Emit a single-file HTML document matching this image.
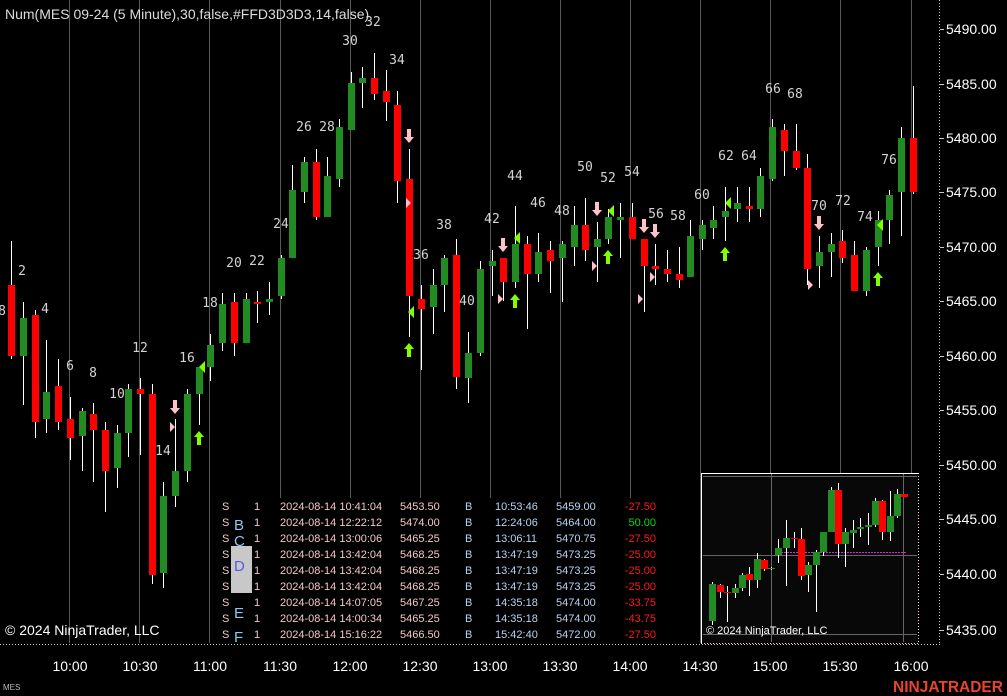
<!DOCTYPE html>
<html><head><meta charset="utf-8"><style>
html,body{margin:0;padding:0;background:#000;width:1007px;height:696px;overflow:hidden}
svg{display:block}
.w line{stroke:#fff;stroke-width:1}
.g{fill:#228b22}.r{fill:#f00}
.lb{font-family:"DejaVu Sans Mono","Liberation Mono",monospace;font-size:13px;fill:#d3d3d3;text-anchor:middle}
.ax{font-family:"Liberation Sans",sans-serif;font-size:14px;fill:#fff}
.tb{font-family:"Liberation Sans",sans-serif;font-size:11px}
</style></head><body>
<svg width="1007" height="696" xmlns="http://www.w3.org/2000/svg">
<g stroke="#5a5a5a" stroke-width="1">
<line x1="69.5" y1="0" x2="69.5" y2="643"/><line x1="139.5" y1="0" x2="139.5" y2="643"/><line x1="209.5" y1="0" x2="209.5" y2="643"/><line x1="280.5" y1="0" x2="280.5" y2="643"/><line x1="350.5" y1="0" x2="350.5" y2="643"/><line x1="420.5" y1="0" x2="420.5" y2="643"/><line x1="490.5" y1="0" x2="490.5" y2="643"/><line x1="560.5" y1="0" x2="560.5" y2="643"/><line x1="630.5" y1="0" x2="630.5" y2="643"/><line x1="700.5" y1="0" x2="700.5" y2="643"/><line x1="770.5" y1="0" x2="770.5" y2="643"/><line x1="840.5" y1="0" x2="840.5" y2="643"/><line x1="911.5" y1="0" x2="911.5" y2="643"/>
</g>
<rect x="211" y="498" width="489" height="145" fill="#000"/>
<g stroke="#ccc" stroke-dasharray="1,2"><line x1="0" y1="644.5" x2="940" y2="644.5"/><line x1="939.5" y1="0" x2="939.5" y2="645"/></g>
<g stroke="#ccc"><line x1="940" y1="29.5" x2="944" y2="29.5"/><line x1="940" y1="84.5" x2="944" y2="84.5"/><line x1="940" y1="138.5" x2="944" y2="138.5"/><line x1="940" y1="192.5" x2="944" y2="192.5"/><line x1="940" y1="247.5" x2="944" y2="247.5"/><line x1="940" y1="301.5" x2="944" y2="301.5"/><line x1="940" y1="356.5" x2="944" y2="356.5"/><line x1="940" y1="410.5" x2="944" y2="410.5"/><line x1="940" y1="465.5" x2="944" y2="465.5"/><line x1="940" y1="519.5" x2="944" y2="519.5"/><line x1="940" y1="574.5" x2="944" y2="574.5"/><line x1="940" y1="630.5" x2="944" y2="630.5"/></g>
<g class="ax"><text x="946" y="34">5490.00</text><text x="946" y="89">5485.00</text><text x="946" y="143">5480.00</text><text x="946" y="197">5475.00</text><text x="946" y="252">5470.00</text><text x="946" y="306">5465.00</text><text x="946" y="361">5460.00</text><text x="946" y="415">5455.00</text><text x="946" y="470">5450.00</text><text x="946" y="524">5445.00</text><text x="946" y="579">5440.00</text><text x="946" y="635">5435.00</text></g>
<g class="ax" text-anchor="middle"><text x="70" y="671">10:00</text><text x="140" y="671">10:30</text><text x="210" y="671">11:00</text><text x="280" y="671">11:30</text><text x="350" y="671">12:00</text><text x="420" y="671">12:30</text><text x="490" y="671">13:00</text><text x="560" y="671">13:30</text><text x="630" y="671">14:00</text><text x="700" y="671">14:30</text><text x="770" y="671">15:00</text><text x="840" y="671">15:30</text><text x="911" y="671">16:00</text></g>
<text x="3" y="690" font-family="Liberation Sans,sans-serif" font-size="8" fill="#bbb">MES</text>
<text x="893" y="692" font-family="Liberation Sans,sans-serif" font-size="15.5" font-weight="bold" fill="#e8452c">NINJATRADER</text>
<text x="5" y="19" font-family="Liberation Sans,sans-serif" font-size="14" fill="#dcdcdc">Num(MES 09-24 (5 Minute),30,false,#FFD3D3D3,14,false)</text>
<text x="5" y="635" class="ax">© 2024 NinjaTrader, LLC</text>
<g class="w">
<line x1="11.5" y1="241" x2="11.5" y2="359"/><rect class="r" x="8" y="285" width="7" height="71"/>
<line x1="23.5" y1="302" x2="23.5" y2="405"/><rect class="g" x="20" y="318" width="7" height="38"/>
<line x1="35.5" y1="310" x2="35.5" y2="438"/><rect class="r" x="32" y="315" width="7" height="107"/>
<line x1="46.5" y1="340" x2="46.5" y2="433"/><rect class="g" x="43" y="392" width="7" height="27"/>
<line x1="58.5" y1="359" x2="58.5" y2="430"/><rect class="r" x="55" y="386" width="7" height="36"/>
<line x1="70.5" y1="397" x2="70.5" y2="460"/><rect class="r" x="67" y="419" width="7" height="19"/>
<line x1="82.5" y1="408" x2="82.5" y2="471"/><rect class="g" x="79" y="411" width="7" height="25"/>
<line x1="93.5" y1="403" x2="93.5" y2="482"/><rect class="r" x="90" y="414" width="7" height="16"/>
<line x1="105.5" y1="422" x2="105.5" y2="512"/><rect class="r" x="102" y="430" width="7" height="41"/>
<line x1="117.5" y1="425" x2="117.5" y2="488"/><rect class="g" x="114" y="433" width="7" height="35"/>
<line x1="128.5" y1="384" x2="128.5" y2="457"/><rect class="g" x="125" y="389" width="7" height="44"/>
<line x1="140.5" y1="378" x2="140.5" y2="455"/><rect class="r" x="137" y="389" width="7" height="5"/>
<line x1="152.5" y1="384" x2="152.5" y2="584"/><rect class="r" x="149" y="394" width="7" height="181"/>
<line x1="163.5" y1="482" x2="163.5" y2="588"/><rect class="g" x="160" y="496" width="7" height="77"/>
<line x1="175.5" y1="419" x2="175.5" y2="507"/><rect class="g" x="172" y="471" width="7" height="25"/>
<line x1="187.5" y1="389" x2="187.5" y2="482"/><rect class="g" x="184" y="394" width="7" height="77"/>
<line x1="199.5" y1="367" x2="199.5" y2="425"/><rect class="g" x="196" y="367" width="7" height="27"/>
<line x1="210.5" y1="334" x2="210.5" y2="381"/><rect class="g" x="207" y="345" width="7" height="22"/>
<line x1="222.5" y1="293" x2="222.5" y2="351"/><rect class="g" x="219" y="304" width="7" height="39"/>
<line x1="234.5" y1="293" x2="234.5" y2="356"/><rect class="r" x="231" y="302" width="7" height="41"/>
<line x1="246.5" y1="293" x2="246.5" y2="343"/><rect class="g" x="243" y="299" width="7" height="44"/>
<line x1="257.5" y1="291" x2="257.5" y2="323"/><rect class="r" x="254" y="302" width="7" height="2"/>
<line x1="269.5" y1="282" x2="269.5" y2="315"/><rect class="g" x="266" y="299" width="7" height="3"/>
<line x1="281.5" y1="255" x2="281.5" y2="299"/><rect class="g" x="278" y="258" width="7" height="38"/>
<line x1="292.5" y1="165" x2="292.5" y2="258"/><rect class="g" x="289" y="190" width="7" height="68"/>
<line x1="304.5" y1="157" x2="304.5" y2="203"/><rect class="g" x="301" y="162" width="7" height="30"/>
<line x1="316.5" y1="149" x2="316.5" y2="220"/><rect class="r" x="313" y="162" width="7" height="55"/>
<line x1="327.5" y1="157" x2="327.5" y2="217"/><rect class="g" x="324" y="176" width="7" height="41"/>
<line x1="339.5" y1="119" x2="339.5" y2="187"/><rect class="g" x="336" y="127" width="7" height="52"/>
<line x1="351.5" y1="72" x2="351.5" y2="130"/><rect class="g" x="348" y="83" width="7" height="47"/>
<line x1="362.5" y1="67" x2="362.5" y2="108"/><rect class="g" x="359" y="78" width="7" height="5"/>
<line x1="374.5" y1="53" x2="374.5" y2="100"/><rect class="r" x="371" y="78" width="7" height="16"/>
<line x1="386.5" y1="70" x2="386.5" y2="121"/><rect class="r" x="383" y="91" width="7" height="11"/>
<line x1="397.5" y1="91" x2="397.5" y2="203"/><rect class="r" x="394" y="105" width="7" height="76"/>
<line x1="409.5" y1="149" x2="409.5" y2="337"/><rect class="r" x="406" y="179" width="7" height="117"/>
<line x1="421.5" y1="285" x2="421.5" y2="370"/><rect class="r" x="418" y="299" width="7" height="10"/>
<line x1="433.5" y1="269" x2="433.5" y2="334"/><rect class="g" x="430" y="285" width="7" height="22"/>
<line x1="444.5" y1="255" x2="444.5" y2="312"/><rect class="g" x="441" y="258" width="7" height="27"/>
<line x1="456.5" y1="239" x2="456.5" y2="389"/><rect class="r" x="453" y="255" width="7" height="122"/>
<line x1="468.5" y1="332" x2="468.5" y2="403"/><rect class="g" x="465" y="353" width="7" height="25"/>
<line x1="480.5" y1="261" x2="480.5" y2="356"/><rect class="g" x="477" y="269" width="7" height="84"/>
<line x1="492.5" y1="250" x2="492.5" y2="296"/><rect class="g" x="489" y="261" width="7" height="5"/>
<line x1="503.5" y1="258" x2="503.5" y2="301"/><rect class="r" x="500" y="258" width="7" height="24"/>
<line x1="515.5" y1="206" x2="515.5" y2="288"/><rect class="g" x="512" y="244" width="7" height="38"/>
<line x1="527.5" y1="236" x2="527.5" y2="329"/><rect class="r" x="524" y="244" width="7" height="30"/>
<line x1="538.5" y1="233" x2="538.5" y2="282"/><rect class="g" x="535" y="252" width="7" height="22"/>
<line x1="550.5" y1="241" x2="550.5" y2="293"/><rect class="r" x="547" y="250" width="7" height="11"/>
<line x1="562.5" y1="241" x2="562.5" y2="302"/><rect class="g" x="559" y="244" width="7" height="14"/>
<line x1="574.5" y1="206" x2="574.5" y2="266"/><rect class="g" x="571" y="225" width="7" height="22"/>
<line x1="585.5" y1="198" x2="585.5" y2="261"/><rect class="r" x="582" y="225" width="7" height="25"/>
<line x1="597.5" y1="222" x2="597.5" y2="282"/><rect class="g" x="594" y="239" width="7" height="8"/>
<line x1="608.5" y1="209" x2="608.5" y2="244"/><rect class="g" x="605" y="217" width="7" height="22"/>
<line x1="620.5" y1="203" x2="620.5" y2="258"/><rect class="g" x="617" y="217" width="7" height="3"/>
<line x1="632.5" y1="203" x2="632.5" y2="239"/><rect class="r" x="629" y="217" width="7" height="22"/>
<line x1="644.5" y1="239" x2="644.5" y2="312"/><rect class="r" x="641" y="239" width="7" height="27"/>
<line x1="655.5" y1="244" x2="655.5" y2="285"/><rect class="r" x="652" y="266" width="7" height="3"/>
<line x1="667.5" y1="250" x2="667.5" y2="282"/><rect class="r" x="664" y="269" width="7" height="5"/>
<line x1="679.5" y1="247" x2="679.5" y2="288"/><rect class="r" x="676" y="274" width="7" height="6"/>
<line x1="690.5" y1="220" x2="690.5" y2="277"/><rect class="g" x="687" y="236" width="7" height="41"/>
<line x1="702.5" y1="220" x2="702.5" y2="250"/><rect class="g" x="699" y="225" width="7" height="14"/>
<line x1="713.5" y1="206" x2="713.5" y2="239"/><rect class="g" x="710" y="220" width="7" height="8"/>
<line x1="725.5" y1="187" x2="725.5" y2="241"/><rect class="g" x="722" y="211" width="7" height="6"/>
<line x1="737.5" y1="187" x2="737.5" y2="222"/><rect class="g" x="734" y="203" width="7" height="6"/>
<line x1="749.5" y1="187" x2="749.5" y2="222"/><rect class="r" x="746" y="206" width="7" height="3"/>
<line x1="760.5" y1="168" x2="760.5" y2="217"/><rect class="g" x="757" y="176" width="7" height="33"/>
<line x1="772.5" y1="119" x2="772.5" y2="181"/><rect class="g" x="769" y="127" width="7" height="52"/>
<line x1="784.5" y1="124" x2="784.5" y2="176"/><rect class="r" x="781" y="130" width="7" height="21"/>
<line x1="796.5" y1="124" x2="796.5" y2="170"/><rect class="r" x="793" y="151" width="7" height="17"/>
<line x1="807.5" y1="154" x2="807.5" y2="285"/><rect class="r" x="804" y="168" width="7" height="101"/>
<line x1="819.5" y1="236" x2="819.5" y2="288"/><rect class="g" x="816" y="252" width="7" height="14"/>
<line x1="831.5" y1="233" x2="831.5" y2="277"/><rect class="g" x="828" y="244" width="7" height="8"/>
<line x1="842.5" y1="230" x2="842.5" y2="263"/><rect class="r" x="839" y="241" width="7" height="17"/>
<line x1="854.5" y1="241" x2="854.5" y2="291"/><rect class="r" x="851" y="255" width="7" height="36"/>
<line x1="866.5" y1="247" x2="866.5" y2="296"/><rect class="g" x="863" y="250" width="7" height="41"/>
<line x1="878.5" y1="211" x2="878.5" y2="266"/><rect class="g" x="875" y="220" width="7" height="27"/>
<line x1="889.5" y1="190" x2="889.5" y2="244"/><rect class="g" x="886" y="195" width="7" height="25"/>
<line x1="901.5" y1="127" x2="901.5" y2="236"/><rect class="g" x="898" y="138" width="7" height="54"/>
<line x1="913.5" y1="86" x2="913.5" y2="194"/><rect class="r" x="910" y="138" width="7" height="54"/>
</g>
<g class="lb">
<text x="2" y="315">8</text><text x="22" y="275">2</text><text x="45" y="313">4</text><text x="70" y="370">6</text><text x="93" y="377">8</text><text x="117" y="398">10</text><text x="140" y="352">12</text><text x="163" y="455">14</text><text x="187" y="362">16</text><text x="210" y="307">18</text><text x="234" y="267">20</text><text x="257" y="265">22</text><text x="281" y="228">24</text><text x="304" y="131">26</text><text x="327" y="131">28</text><text x="350" y="45">30</text><text x="373" y="26">32</text><text x="397" y="64">34</text><text x="421" y="259">36</text><text x="444" y="229">38</text><text x="467" y="305">40</text><text x="492" y="223">42</text><text x="515" y="180">44</text><text x="538" y="207">46</text><text x="562" y="215">48</text><text x="585" y="171">50</text><text x="608" y="182">52</text><text x="632" y="176">54</text><text x="656" y="218">56</text><text x="678" y="220">58</text><text x="702" y="199">60</text><text x="726" y="160">62</text><text x="749" y="160">64</text><text x="773" y="93">66</text><text x="795" y="98">68</text><text x="819" y="210">70</text><text x="843" y="205">72</text><text x="865" y="221">74</text><text x="889" y="164">76</text>
</g>
<g fill="#ffc0cb">
<path d="M173 400h4v8h3l-5 6-5-6h3z"/><path d="M407 129h4v8h3l-5 6-5-6h3z"/><path d="M501 238h4v8h3l-5 6-5-6h3z"/><path d="M595 202h4v8h3l-5 6-5-6h3z"/><path d="M642 219h4v8h3l-5 6-5-6h3z"/><path d="M653 224h4v8h3l-5 6-5-6h3z"/><path d="M817 216h4v8h3l-5 6-5-6h3z"/>
<path d="M170 422l5 5-5 5z"/><path d="M406 198l5 5-5 5z"/><path d="M498 294l5 5-5 5z"/><path d="M592 261l5 5-5 5z"/><path d="M638 294l5 5-5 5z"/><path d="M650 272l5 5-5 5z"/><path d="M808 280l5 5-5 5z"/>
</g>
<g fill="#7fff00">
<path d="M197 445h4v-8h3l-5-6-5 6h3z"/><path d="M407 357h4v-8h3l-5-6-5 6h3z"/><path d="M513 308h4v-8h3l-5-6-5 6h3z"/><path d="M606 264h4v-8h3l-5-6-5 6h3z"/><path d="M723 261h4v-8h3l-5-6-5 6h3z"/><path d="M876 286h4v-8h3l-5-6-5 6h3z"/>
<path d="M205 361l-6 6 6 6z"/><path d="M414 306l-6 6 6 6z"/><path d="M520 232l-6 6 6 6z"/><path d="M614 205l-6 6 6 6z"/><path d="M731 197l-6 6 6 6z"/><path d="M883 219l-6 6 6 6z"/>
</g>
<rect x="231" y="546" width="21" height="47" fill="#c8c8c8"/>
<g class="tb" fill="#f0c8c8">
<text x="222" y="510">S</text><text x="222" y="526">S</text><text x="222" y="542">S</text><text x="222" y="558">S</text><text x="222" y="574">S</text><text x="222" y="590">S</text><text x="222" y="606">S</text><text x="222" y="622">S</text><text x="222" y="638">S</text>
<text x="254" y="510">1</text><text x="254" y="526">1</text><text x="254" y="542">1</text><text x="254" y="558">1</text><text x="254" y="574">1</text><text x="254" y="590">1</text><text x="254" y="606">1</text><text x="254" y="622">1</text><text x="254" y="638">1</text>
<text x="280" y="510">2024-08-14 10:41:04</text><text x="280" y="526">2024-08-14 12:22:12</text><text x="280" y="542">2024-08-14 13:00:06</text><text x="280" y="558">2024-08-14 13:42:04</text><text x="280" y="574">2024-08-14 13:42:04</text><text x="280" y="590">2024-08-14 13:42:04</text><text x="280" y="606">2024-08-14 14:07:05</text><text x="280" y="622">2024-08-14 14:00:34</text><text x="280" y="638">2024-08-14 15:16:22</text>
<text x="400" y="510">5453.50</text><text x="400" y="526">5474.00</text><text x="400" y="542">5465.25</text><text x="400" y="558">5468.25</text><text x="400" y="574">5468.25</text><text x="400" y="590">5468.25</text><text x="400" y="606">5467.25</text><text x="400" y="622">5465.25</text><text x="400" y="638">5466.50</text>
</g>
<g class="tb" fill="#b8d4ee">
<text x="465" y="510">B</text><text x="465" y="526">B</text><text x="465" y="542">B</text><text x="465" y="558">B</text><text x="465" y="574">B</text><text x="465" y="590">B</text><text x="465" y="606">B</text><text x="465" y="622">B</text><text x="465" y="638">B</text>
<text x="495" y="510">10:53:46</text><text x="495" y="526">12:24:06</text><text x="495" y="542">13:06:11</text><text x="495" y="558">13:47:19</text><text x="495" y="574">13:47:19</text><text x="495" y="590">13:47:19</text><text x="495" y="606">14:35:18</text><text x="495" y="622">14:35:18</text><text x="495" y="638">15:42:40</text>
<text x="556" y="510">5459.00</text><text x="556" y="526">5464.00</text><text x="556" y="542">5470.75</text><text x="556" y="558">5473.25</text><text x="556" y="574">5473.25</text><text x="556" y="590">5473.25</text><text x="556" y="606">5474.00</text><text x="556" y="622">5474.00</text><text x="556" y="638">5472.00</text>
</g>
<g class="tb" text-anchor="end" fill="#ff1a1a">
<text x="656" y="510">-27.50</text><text x="656" y="526" fill="#00e000">50.00</text><text x="656" y="542">-27.50</text><text x="656" y="558">-25.00</text><text x="656" y="574">-25.00</text><text x="656" y="590">-25.00</text><text x="656" y="606">-33.75</text><text x="656" y="622">-43.75</text><text x="656" y="638">-27.50</text>
</g>
<g font-family="Liberation Sans,sans-serif" font-size="15" fill="#8cc8f0">
<text x="234" y="530">B</text><text x="234" y="546">C</text><text x="234" y="571" fill="#5a5ae0">D</text><text x="234" y="618">E</text><text x="234" y="642">F</text>
</g>
<rect x="701" y="473" width="218" height="171" fill="#080808"/>
<g stroke="#ffd0d0" stroke-dasharray="1,2"><line x1="918.5" y1="473" x2="918.5" y2="644"/><line x1="701" y1="643.5" x2="919" y2="643.5"/></g>
<g stroke="#fff"><line x1="701.5" y1="473" x2="701.5" y2="644"/><line x1="701" y1="473.5" x2="919" y2="473.5"/></g>
<g stroke="#666"><line x1="703" y1="476.5" x2="917" y2="476.5"/><line x1="703" y1="555.5" x2="917" y2="555.5"/><line x1="703" y1="634.5" x2="917" y2="634.5"/><line x1="771.5" y1="474" x2="771.5" y2="642"/><line x1="903.5" y1="474" x2="903.5" y2="642"/></g>
<line x1="775" y1="552.5" x2="907" y2="552.5" stroke="#e020e0" stroke-dasharray="2,1"/>
<g class="w">
<line x1="712.5" y1="582" x2="712.5" y2="625"/><rect class="g" x="709" y="584" width="7" height="37"/>
<line x1="720.5" y1="584" x2="720.5" y2="598"/><rect class="r" x="717" y="585" width="7" height="7"/>
<line x1="727.5" y1="586" x2="727.5" y2="622"/><rect class="r" x="724" y="592" width="7" height="1"/>
<line x1="735.5" y1="584" x2="735.5" y2="598"/><rect class="g" x="732" y="588" width="7" height="5"/>
<line x1="742.5" y1="573" x2="742.5" y2="591"/><rect class="g" x="739" y="575" width="7" height="13"/>
<line x1="749.5" y1="567" x2="749.5" y2="596"/><rect class="r" x="746" y="574" width="7" height="6"/>
<line x1="757.5" y1="553" x2="757.5" y2="588"/><rect class="g" x="754" y="559" width="7" height="21"/>
<line x1="764.5" y1="559" x2="764.5" y2="571"/><rect class="r" x="761" y="560" width="7" height="9"/>
<line x1="771.5" y1="567" x2="771.5" y2="570"/><rect class="g" x="768" y="568" width="7" height="1"/>
<line x1="778.5" y1="539" x2="778.5" y2="563"/><rect class="g" x="775" y="548" width="7" height="7"/>
<line x1="786.5" y1="520" x2="786.5" y2="586"/><rect class="g" x="783" y="538" width="7" height="10"/>
<line x1="794.5" y1="532" x2="794.5" y2="548"/><rect class="r" x="791" y="538" width="7" height="1"/>
<line x1="801.5" y1="528" x2="801.5" y2="580"/><rect class="r" x="798" y="539" width="7" height="37"/>
<line x1="808.5" y1="562" x2="808.5" y2="592"/><rect class="g" x="805" y="565" width="7" height="10"/>
<line x1="816.5" y1="550" x2="816.5" y2="612"/><rect class="g" x="813" y="552" width="7" height="13"/>
<line x1="823.5" y1="532" x2="823.5" y2="556"/><rect class="g" x="820" y="532" width="7" height="20"/>
<line x1="831.5" y1="487" x2="831.5" y2="532"/><rect class="g" x="828" y="490" width="7" height="42"/>
<line x1="838.5" y1="483" x2="838.5" y2="558"/><rect class="r" x="835" y="490" width="7" height="54"/>
<line x1="845.5" y1="528" x2="845.5" y2="567"/><rect class="g" x="842" y="532" width="7" height="12"/>
<line x1="853.5" y1="520" x2="853.5" y2="548"/><rect class="g" x="850" y="530" width="7" height="3"/>
<line x1="860.5" y1="518" x2="860.5" y2="537"/><rect class="g" x="857" y="527" width="7" height="2"/>
<line x1="868.5" y1="513" x2="868.5" y2="545"/><rect class="g" x="865" y="525" width="7" height="2"/>
<line x1="875.5" y1="498" x2="875.5" y2="527"/><rect class="g" x="872" y="501" width="7" height="24"/>
<line x1="882.5" y1="500" x2="882.5" y2="540"/><rect class="r" x="879" y="501" width="7" height="31"/>
<line x1="890.5" y1="491" x2="890.5" y2="541"/><rect class="g" x="887" y="516" width="7" height="16"/>
<line x1="897.5" y1="489" x2="897.5" y2="518"/><rect class="g" x="894" y="494" width="7" height="22"/>
<rect class="r" x="901" y="494" width="7" height="3"/>
</g>
<text x="706" y="634" font-family="Liberation Sans,sans-serif" font-size="11" fill="#fff">© 2024 NinjaTrader, LLC</text>
</svg>
</body></html>
